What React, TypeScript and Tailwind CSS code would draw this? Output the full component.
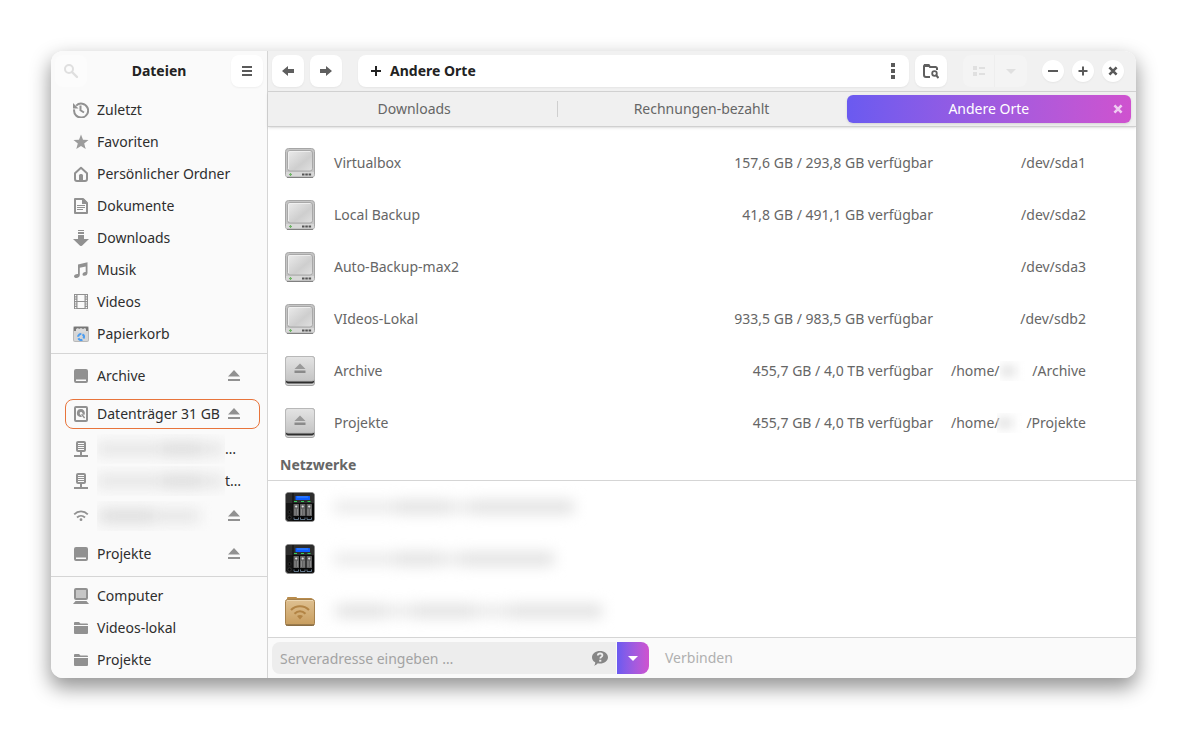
import type { ReactNode } from "react";

/* ---------- symbolic icons (16 × 16) ---------- */

function Glyph({ children, className = "size-4 shrink-0" }: { children: ReactNode; className?: string }) {
  return (
    <svg viewBox="0 0 16 16" className={className} fill="currentColor" aria-hidden="true">
      {children}
    </svg>
  );
}

const RecentIcon = () => (
  <Glyph>
    <path d="M3.2 3.6A7 7 0 1 1 1.2 7.4" fill="none" stroke="currentColor" strokeWidth="2" />
    <path d="M0 1v5.5h5.5z" />
    <path d="M7.5 3.5v4.8l3.5 2.2" fill="none" stroke="currentColor" strokeWidth="2" />
  </Glyph>
);
const StarIcon = () => (
  <Glyph>
    <path opacity=".9" d="M8 .5l2 5.300 5.500.2-4.300 3.500 1.500 5.500L8 12l-4.700 3 1.500-5.500L.5 6l5.500-.2z" />
  </Glyph>
);
const HomeIcon = () => (
  <Glyph>
    <path d="M2 7.200 8 1.800l6 5.400V13a2 2 0 0 1-2 2H4a2 2 0 0 1-2-2z" fill="none" stroke="currentColor" strokeWidth="2" strokeLinejoin="round" />
    <path d="M6 15V9.500A1.500 1.500 0 0 1 7.500 8h1A1.500 1.500 0 0 1 10 9.500V15z" />
  </Glyph>
);
const DocumentIcon = () => (
  <Glyph>
    <path d="M2 1h8l4 4v10H2z" fill="none" stroke="currentColor" strokeWidth="2" strokeLinejoin="round" />
    <path d="M9 1h2l3 3v2H9zM4 7h8v1H4zM4 9h8v1H4zM4 11h6v1H4z" />
  </Glyph>
);
const DownloadIcon = () => (
  <Glyph>
    <path d="M5 0h6v1H5zM5 2h6v2H5zM5 5h6v4h5l-6.500 6.200a2 2 0 0 1-3 0L0 9h5z" />
  </Glyph>
);
const MusicIcon = () => (
  <Glyph>
    <path d="M5 2.500 14.500.3v10.500c0 1.800-1.300 3-3 3-1.300 0-2-.7-2-1.600 0-1.400 1.500-2.500 3.200-2.300V4.400L6.800 5.700v7.400c0 1.600-1.500 2.900-3.300 2.900-1.500 0-2.500-.8-2.500-1.800 0-1.300 1.600-2.500 4-2.300z" />
  </Glyph>
);
const FilmIcon = () => (
  <Glyph>
    <path fillRule="evenodd" d="M1 0h14v15H1zM4.500 1v6h7V1zM4.500 8v6h7V8zM2 1v1.200h1.300V1zM2 3.400v1.200h1.300V3.400zM2 5.800V7h1.300V5.800zM2 8.200v1.200h1.300V8.200zM2 10.600v1.200h1.300v-1.200zM2 13v1.200h1.300V13zM12.700 1v1.200H14V1zM12.700 3.400v1.200H14V3.400zM12.700 5.800V7H14V5.800zM12.700 8.200v1.200H14V8.200zM12.700 10.600v1.200H14v-1.200zM12.700 13v1.200H14V13z" />
  </Glyph>
);
const TrashIcon = () => (
  <Glyph>
    <rect x="0" y="0" width="16" height="16" rx="2" fill="#b9b9b9" />
    <rect x="1" y="4" width="14" height="11" rx="1" fill="#d6d6d6" />
    <path d="M1 1h14v4H1z" fill="#777" />
    <path d="M3 3l2-1 1 1 2-1 2 1 2-1 1 1v3H3z" fill="#dcdcdc" />
    <circle cx="8" cy="11" r="2.900" fill="none" stroke="#4c9df0" strokeWidth="2" strokeDasharray="4.600 1.400" transform="rotate(-60 8 11)" />
  </Glyph>
);
const DriveIcon = () => (
  <Glyph>
    <path fillRule="evenodd" d="M3 1h10a2 2 0 0 1 2 2v10a2 2 0 0 1-2 2H3a2 2 0 0 1-2-2V3a2 2 0 0 1 2-2zm0 10.500V13h10v-1.500z" />
  </Glyph>
);
const HardDiskIcon = () => (
  <Glyph>
    <rect x="2" y="1" width="12" height="14" rx="1" fill="none" stroke="currentColor" strokeWidth="2" />
    <path fillRule="evenodd" d="M8 3a4 4 0 1 1-1 7.900A4 4 0 0 1 8 3zm0 2.900a1.300 1.300 0 1 0 0 2.600 1.300 1.300 0 0 0 0-2.600z" />
    <path d="M8 7.500l3.800 4.800" stroke="#fafafa" strokeWidth="2.400" />
    <path d="M8.600 8.200l3 3.800" stroke="currentColor" strokeWidth="1.400" />
  </Glyph>
);
const ServerIcon = () => (
  <Glyph>
    <path fillRule="evenodd" d="M5 0h6a2 2 0 0 1 2 2v7a2 2 0 0 1-2 2H9v3h6v2H1v-2h6v-3H5a2 2 0 0 1-2-2V2a2 2 0 0 1 2-2zm0 2v1h6V2zm0 2v1h6V4zm0 2v1h6V6zm0 2v1h6V8z" />
  </Glyph>
);
const WifiIcon = () => (
  <Glyph>
    <path d="M1.200 6.300C5 2.500 11 2.500 14.800 6.300" fill="none" stroke="currentColor" strokeWidth="1.800" />
    <path d="M4 9.500c2.300-2.200 5.700-2.200 8 0" fill="none" stroke="currentColor" strokeWidth="1.800" />
    <circle cx="8" cy="11.700" r="1.400" />
  </Glyph>
);
const ComputerIcon = () => (
  <Glyph>
    <rect x="2" y="1" width="12" height="10" rx="1" fill="#c6c6c6" stroke="currentColor" strokeWidth="2" />
    <path d="M2.500 13h11l2.500 3H0z" />
  </Glyph>
);
const FolderIcon = () => (
  <Glyph>
    <path d="M1 3a1 1 0 0 1 1-1h4l1.500 1.500H14a1 1 0 0 1 1 1V5H1zM1 6h14v7a1 1 0 0 1-1 1H2a1 1 0 0 1-1-1z" />
  </Glyph>
);
const EjectIcon = () => (
  <Glyph>
    <path d="M8 2l6 6.500H2zM2 11h12v2H2z" />
  </Glyph>
);
const CloseIcon = ({ className }: { className?: string }) => (
  <Glyph className={className}>
    <path d="M4.400 4.400l7.200 7.200M11.600 4.400l-7.200 7.200" stroke="currentColor" strokeWidth="2.600" />
  </Glyph>
);

/* ---------- full-colour icons (30 × 30) ---------- */

const DiskPicture = () => (
  <svg viewBox="0 0 30 30" className="size-[30px]" aria-hidden="true">
    <defs>
      <linearGradient id="disk-top" x1="0" y1="0" x2="1" y2="1">
        <stop offset="0" stopColor="#ececec" />
        <stop offset=".6" stopColor="#cecece" />
        <stop offset="1" stopColor="#e0e0e0" />
      </linearGradient>
    </defs>
    <rect x=".5" y=".5" width="29" height="29" rx="3" fill="#c6c6c6" stroke="#a6a6a6" />
    <path d="M1 24h28v3a2 2 0 0 1-2 2H3a2 2 0 0 1-2-2z" fill="#d8d8d8" />
    <path d="M2 29.300h26" stroke="#777" />
    <rect x="2.500" y="2.500" width="25" height="20.500" rx="2.500" fill="url(#disk-top)" stroke="#a8a8a8" />
    <path d="M3.500 21V4.500a1 1 0 0 1 1-1h21" fill="none" stroke="#f2f2f2" strokeWidth=".8" />
    <path d="M4 26.500h3M5.500 25v3" stroke="#6fb566" strokeWidth="1.200" />
    <path d="M17 25.500h2.500v2H17zM20.300 25.500h2.500v2h-2.500zM23.600 25.500h2.500v2h-2.500z" fill="#555" />
  </svg>
);

const RemovablePicture = () => (
  <svg viewBox="0 0 30 30" className="size-[30px]" aria-hidden="true">
    <defs>
      <linearGradient id="removable-top" x1="0" y1="0" x2="0" y2="1">
        <stop offset="0" stopColor="#e4e4e4" />
        <stop offset="1" stopColor="#c4c4c4" />
      </linearGradient>
    </defs>
    <rect x=".5" y=".5" width="29" height="29" rx="2.500" fill="#d6d6d6" stroke="#a2a2a2" />
    <path d="M1 24h28v1.500q0 2-2 2H3q-2 0-2-2z" fill="#2e2e2e" />
    <path d="M.5 3a2.500 2.500 0 0 1 2.500-2.500h24A2.500 2.500 0 0 1 29.500 3v20q0 2-2.500 2H3q-2.500 0-2.500-2z" fill="url(#removable-top)" stroke="#b8b8b8" />
    <path d="M15 7.500l5.500 5.500h-11z" fill="#999" />
    <path d="M9.500 14.500h11v2.500h-11z" fill="#8a8a8a" />
  </svg>
);

const NasPicture = () => (
  <svg viewBox="0 0 30 30" className="size-[30px]" aria-hidden="true">
    <rect x=".5" y=".5" width="29" height="29" rx="3" fill="#151515" stroke="#8a8a8a" />
    <path d="M1 4q0-3 3-3h22q3 0 3 3v7H1z" fill="#2d2d2d" />
    <path d="M8 1v28" stroke="#0c0c0c" />
    <rect x="10.500" y="4" width="14.500" height="4" rx=".5" fill="#0d5dff" />
    <path d="M12 5h11" stroke="#3f8cff" />
    <path d="M9 9.500h3M16 9.500h3M22.500 9.500h3" stroke="#34d35a" strokeWidth="1.200" />
    <rect x="8" y="11.500" width="21" height="17" fill="#070707" />
    {[8.5, 15, 21.5].map((x) => (
      <g key={x} transform={`translate(${x} 12)`}>
        <rect width="5.500" height="12" rx=".5" fill="#636363" />
        <circle cx="2.700" cy="2.500" r="1.100" fill="#dedede" />
        <path d="M1.500 5v6M4 5v6" stroke="#929292" strokeWidth=".8" />
        <path d="M.5 13.500v2h4.500v-2" fill="none" stroke="#7790a8" strokeWidth=".8" />
      </g>
    ))}
    <circle cx="4.500" cy="20" r="1.500" fill="#050505" stroke="#333" strokeWidth=".7" />
    <circle cx="4.500" cy="25.500" r="1.700" fill="#050505" stroke="#444" strokeWidth=".7" />
  </svg>
);

const RemoteFolderPicture = () => (
  <svg viewBox="0 0 30 30" className="size-[30px]" aria-hidden="true">
    <defs>
      <linearGradient id="folder-front" x1="0" y1="0" x2="0" y2="1">
        <stop offset="0" stopColor="#dfc192" />
        <stop offset="1" stopColor="#c89d5e" />
      </linearGradient>
    </defs>
    <path d="M2 5V2q0-1 1-1h8q1 0 1 1h14q2 0 2 2v2H2z" fill="#b98c4c" />
    <rect x=".5" y="3.500" width="29" height="26" rx="2" fill="url(#folder-front)" stroke="#a6814d" />
    <path d="M2 4.500h26" stroke="#ecd6b0" />
    <path d="M1 29h28" stroke="#6f5a3a" />
    <g fill="none" stroke="#b28445" strokeWidth="2.200">
      <path d="M6 14c5-5 13-5 18 0" />
      <path d="M9.500 17.700c3.300-3 7.700-3 11 0" />
    </g>
    <path d="M12 20q3-2 6 0l-3 3.500z" fill="#b28445" />
  </svg>
);

/* ---------- obscured names ---------- */

function Obscured({ parts, tone }: { parts: number[]; tone: string }) {
  return (
    <span aria-hidden="true" className={`flex items-center blur-[7px] ${tone}`}>
      {parts.map((w, i) => (
        <span key={i} className={i % 2 ? "h-3.5 bg-current" : "h-3 bg-current opacity-75"} style={{ width: w }} />
      ))}
    </span>
  );
}

/* ---------- sidebar ---------- */

type Place = {
  icon: ReactNode;
  label?: string;
  parts?: number[];
  tail?: string;
  eject?: boolean;
  marked?: boolean;
};

const places: Place[][] = [
  [
    { icon: <RecentIcon />, label: "Zuletzt" },
    { icon: <StarIcon />, label: "Favoriten" },
    { icon: <HomeIcon />, label: "Persönlicher Ordner" },
    { icon: <DocumentIcon />, label: "Dokumente" },
    { icon: <DownloadIcon />, label: "Downloads" },
    { icon: <MusicIcon />, label: "Musik" },
    { icon: <FilmIcon />, label: "Videos" },
    { icon: <TrashIcon />, label: "Papierkorb" },
  ],
  [
    { icon: <DriveIcon />, label: "Archive", eject: true },
    { icon: <HardDiskIcon />, label: "Datenträger 31 GB", eject: true, marked: true },
    { icon: <ServerIcon />, parts: [66, 38, 22], tail: "…" },
    { icon: <ServerIcon />, parts: [66, 38, 22], tail: "t…" },
    { icon: <WifiIcon />, parts: [6, 50, 46], eject: true },
    { icon: <DriveIcon />, label: "Projekte", eject: true },
  ],
  [
    { icon: <ComputerIcon />, label: "Computer" },
    { icon: <FolderIcon />, label: "Videos-lokal" },
    { icon: <FolderIcon />, label: "Projekte" },
  ],
];

function PlaceRow({ place }: { place: Place }) {
  const height = place.eject ? "my-1" : "my-px";
  const frame = place.marked ? "border-[#e8743b]" : "border-transparent";
  return (
    <li className={`ml-3.5 mr-[7px] flex h-[30px] items-center rounded-lg border pl-[7px] pr-[17px] ${height} ${frame}`}>
      <a href="#" className="flex min-w-0 flex-1 items-center gap-2 whitespace-nowrap text-[#2e2e2e]">
        <span className="text-[#919191]">{place.icon}</span>
        {place.label}
        {place.parts && (
          <span className="w-32 overflow-hidden py-2">
            <Obscured parts={place.parts} tone="text-[#dcdcdc]" />
          </span>
        )}
        {place.tail && <span className="-ml-2">{place.tail}</span>}
      </a>
      {place.eject && (
        <button aria-label="Auswerfen" className="text-[#919191]">
          <EjectIcon />
        </button>
      )}
    </li>
  );
}

function Sidebar() {
  return (
    <aside className="w-[217px] shrink-0 border-r border-[#d5d5d5] bg-[#fafafa]">
      <div className="flex h-10 items-center justify-between px-1">
        <button aria-label="Suchen" className="grid size-8 place-items-center rounded-lg bg-[#fcfcfc] text-[#dfdfdf]">
          <Glyph>
            <circle cx="6" cy="6" r="4" fill="none" stroke="currentColor" strokeWidth="2" />
            <path d="M9 9l5 5" stroke="currentColor" strokeWidth="2.400" strokeLinecap="round" />
          </Glyph>
        </button>
        <h1 className="font-bold text-[#222]">Dateien</h1>
        <button aria-label="Menü" className="grid size-8 place-items-center rounded-lg bg-white text-[#5a5a5a] shadow-xs">
          <Glyph>
            <path d="M3 3h10v2H3zM3 7h10v2H3zM3 11h10v2H3z" />
          </Glyph>
        </button>
      </div>
      <nav className="divide-y divide-[#d5d5d5]">
        {places.map((group, i) => (
          <ul key={i} className="flex flex-col py-[3px] last:pb-0.5">
            {group.map((place, j) => (
              <PlaceRow key={j} place={place} />
            ))}
          </ul>
        ))}
      </nav>
    </aside>
  );
}

/* ---------- header ---------- */

function Header() {
  return (
    <header className="flex h-[41px] items-center border-b border-[#d5d5d5] bg-[#f1f1f1] pl-1 pr-3">
      <div className="flex gap-1.5 text-[#5f5f5f]">
        <button aria-label="Zurück" className="grid size-8 place-items-center rounded-lg bg-white shadow-xs">
          <Glyph>
            <path d="M2 8l6-5v3h6v4H8v3z" />
          </Glyph>
        </button>
        <button aria-label="Vor" className="grid size-8 place-items-center rounded-lg bg-white shadow-xs">
          <Glyph>
            <path d="M14 8L8 3v3H2v4h6v3z" />
          </Glyph>
        </button>
      </div>
      <div className="ml-4 flex h-8 flex-1 items-center rounded-lg bg-white pl-2.5 pr-2 shadow-xs">
        <Glyph>
          <path d="M7 3h2v4h4v2H9v4H7V9H3V7h4z" fill="#222" />
        </Glyph>
        <span className="ml-1.5 flex-1 font-bold text-[#222]">Andere Orte</span>
        <button aria-label="Ordnermenü" className="text-[#5a5a5a]">
          <Glyph>
            <path d="M6 0h4v4H6zM6 6h4v4H6zM6 12h4v4H6z" />
          </Glyph>
        </button>
      </div>
      <button aria-label="Ordner durchsuchen" className="ml-1.5 grid size-8 place-items-center rounded-lg bg-white text-[#5f5f5f] shadow-xs">
        <Glyph>
          <path d="M7 14H3a2 2 0 0 1-2-2V3.500A1.500 1.500 0 0 1 2.500 2h3L7 4h5.500A1.500 1.500 0 0 1 14 5.500V7" fill="none" stroke="currentColor" strokeWidth="2" />
          <path d="M1 1h5l2 3H1z" />
          <circle cx="11.500" cy="10.500" r="2.300" fill="none" stroke="currentColor" strokeWidth="1.800" />
          <path d="M13 12l2.500 3" stroke="currentColor" strokeWidth="2" />
        </Glyph>
      </button>
      <div className="ml-4 flex h-8 divide-x divide-[#eeeeee] rounded-lg bg-[#f4f4f4] text-[#e0e0e0]">
        <button aria-label="Ansicht" disabled className="grid w-8 place-items-center">
          <Glyph>
            <path d="M2 3h4v4H2zM2 9h4v4H2zM8 4h6v2H8zM8 10h6v2H8z" />
          </Glyph>
        </button>
        <button aria-label="Ansichtsoptionen" disabled className="grid w-8 place-items-center">
          <Glyph>
            <path d="M3 6h10l-5 5z" />
          </Glyph>
        </button>
      </div>
      <div className="ml-[15px] flex gap-2 text-[#5a5a5a]">
        <button aria-label="Minimieren" className="grid size-[22px] place-items-center rounded-full bg-white shadow-xs">
          <Glyph>
            <path d="M3 7h10v2H3z" />
          </Glyph>
        </button>
        <button aria-label="Maximieren" className="grid size-[22px] place-items-center rounded-full bg-white shadow-xs">
          <Glyph>
            <path d="M7 3.500h2V7h3.500v2H9v3.500H7V9H3.500V7H7z" />
          </Glyph>
        </button>
        <button aria-label="Schließen" className="grid size-[22px] place-items-center rounded-full bg-white shadow-xs">
          <CloseIcon className="size-4" />
        </button>
      </div>
    </header>
  );
}

function Tabs() {
  return (
    <div role="tablist" className="flex h-[35px] items-center gap-px border-b border-[#d0d0d0] bg-[#f0f0f0] pl-1 pr-[5px] text-[#666] shadow-sm">
      <button role="tab" className="h-7 flex-1">Downloads</button>
      <span className="h-4 w-px bg-[#cfcfcf]" />
      <button role="tab" className="h-7 flex-1">Rechnungen-bezahlt</button>
      <span className="w-px" />
      <div className="grid h-7 flex-1 grid-cols-[26px_1fr_26px] items-center rounded-md bg-linear-to-r from-[#6a5af0] to-[#cf52cf] text-white shadow-sm">
        <button role="tab" aria-selected="true" className="col-start-2">Andere Orte</button>
        <button aria-label="Tab schließen" className="grid place-items-center text-white/70">
          <CloseIcon className="size-4" />
        </button>
      </div>
    </div>
  );
}

/* ---------- content ---------- */

type Volume = { name: string; space?: string; path: ReactNode; removable?: boolean };

const HomePath = ({ folder }: { folder: string }) => (
  <span className="flex justify-between">
    <span>/home/</span>
    <span aria-hidden="true" className="-ml-1 h-5 w-7 overflow-hidden">
      <span className="mt-1 block h-3 w-4 bg-[#e6e6e6] blur-[5px]" />
    </span>
    <span>{folder}</span>
  </span>
);

const volumes: Volume[] = [
  { name: "Virtualbox", space: "157,6 GB / 293,8 GB verfügbar", path: "/dev/sda1" },
  { name: "Local Backup", space: "41,8 GB / 491,1 GB verfügbar", path: "/dev/sda2" },
  { name: "Auto-Backup-max2", path: "/dev/sda3" },
  { name: "VIdeos-Lokal", space: "933,5 GB / 983,5 GB verfügbar", path: "/dev/sdb2" },
  { name: "Archive", space: "455,7 GB / 4,0 TB verfügbar", path: <HomePath folder="/Archive" />, removable: true },
  { name: "Projekte", space: "455,7 GB / 4,0 TB verfügbar", path: <HomePath folder="/Projekte" />, removable: true },
];

const networks: { icon: ReactNode; parts: number[] }[] = [
  { icon: <NasPicture />, parts: [62, 52, 24, 102] },
  { icon: <NasPicture />, parts: [62, 44, 22, 92] },
  { icon: <RemoteFolderPicture />, parts: [6, 44, 30, 60, 36, 92] },
];

function Content() {
  return (
    <main className="flex-1 text-[#666]">
      <table className="mt-2.5 w-full whitespace-nowrap">
        <tbody>
          {volumes.map((v) => (
            <tr key={v.name} className="h-[52px]">
              <td className="w-[66px] pl-[17px]">{v.removable ? <RemovablePicture /> : <DiskPicture />}</td>
              <td>{v.name}</td>
              <td className="pr-[18px] text-right">{v.space}</td>
              <td className="w-[185px] pr-[50px] text-right">{v.path}</td>
            </tr>
          ))}
        </tbody>
      </table>
      <h2 className="flex h-8 items-center border-b border-[#d5d5d5] pl-3 font-bold">Netzwerke</h2>
      <ul>
        {networks.map((n, i) => (
          <li key={i} className="flex h-[52px] items-center gap-[19px] pl-[17px]">
            {n.icon}
            <Obscured parts={n.parts} tone="text-[#e2e2e2]" />
          </li>
        ))}
      </ul>
    </main>
  );
}

function ServerBar() {
  return (
    <form className="flex h-[41px] items-center gap-px border-t border-[#d5d5d5] bg-[#fafafa] px-1" onSubmit={(e) => e.preventDefault()}>
      <div className="flex h-8 w-2/5 items-center rounded-l-lg bg-[#ededed] pr-2">
        <input
          type="text"
          aria-label="Serveradresse"
          placeholder="Serveradresse eingeben …"
          className="h-8 min-w-0 flex-1 bg-transparent pl-2 outline-none placeholder:text-[#a3a3a3]"
        />
        <button type="button" aria-label="Hilfe" className="text-[#868686]">
          <Glyph>
            <path d="M8 1c4.400 0 8 2.700 8 6.200s-3.600 6.300-8 6.300c-.8 0-1.500 0-2.200-.2C5 14.500 3.700 15.500 2 15.700c.9-.8 1.300-2 1.200-3.400C1.200 11.200 0 9.300 0 7.200 0 3.700 3.600 1 8 1z" />
            <path d="M5.800 5.500c.1-1.300 1-2 2.300-2s2.300.7 2.300 1.800c0 1.600-2.100 1.600-2.100 3.200" fill="none" stroke="#ededed" strokeWidth="1.800" />
            <path d="M7.200 9.800h2.100v1.900H7.200z" fill="#ededed" />
          </Glyph>
        </button>
      </div>
      <button
        type="button"
        aria-label="Letzte Server"
        className="grid size-8 place-items-center rounded-r-lg bg-linear-to-r from-[#6a5af0] to-[#cf52cf] text-white"
      >
        <Glyph>
          <path d="M3 6h10l-5 5z" />
        </Glyph>
      </button>
      <button type="submit" disabled className="h-8 px-[15px] text-[#b0b0b0]">
        Verbinden
      </button>
    </form>
  );
}

export default function App() {
  return (
    <div className="min-h-screen bg-white p-[51px] font-['Noto_Sans',sans-serif] text-[14px] leading-5">
      <div className="flex overflow-hidden rounded-xl bg-white shadow-[0_9px_20px_1px_rgba(0,0,0,0.42)]">
        <Sidebar />
        <div className="flex min-w-0 flex-1 flex-col">
          <Header />
          <Tabs />
          <Content />
          <ServerBar />
        </div>
      </div>
    </div>
  );
}
